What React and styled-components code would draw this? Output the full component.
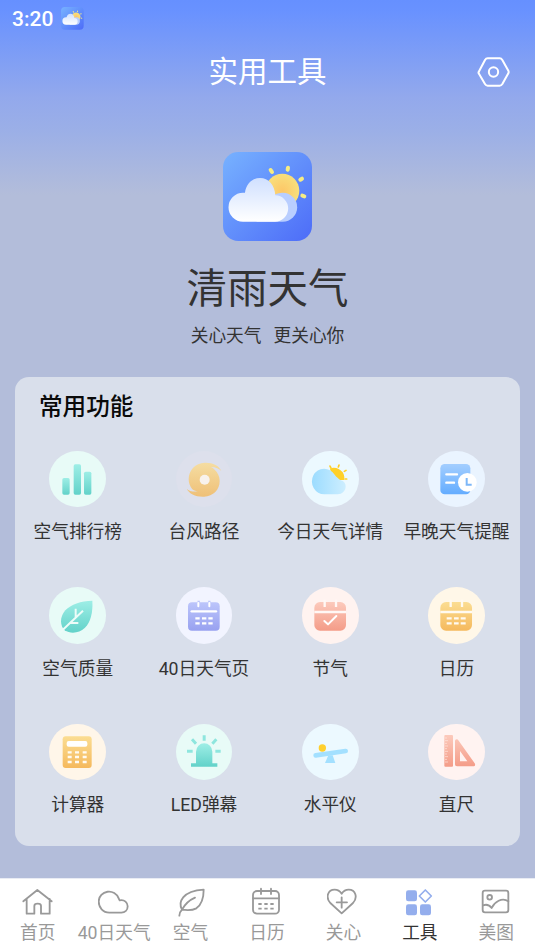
import React, { useState } from "react";
import styled, { createGlobalStyle } from "styled-components";

const GRADIENTS = {
  mint: ["#9eeee6", "#62d2c9"],
  sand: ["#f5dda2", "#efc077"],
  sky: ["#9cdcff", "#cdeeff"],
  blue: ["#a3ceff", "#63acff"],
  violet: ["#bcc5fb", "#98a1f0"],
  coral: ["#fccabc", "#f49c88"],
  amber: ["#fbdd92", "#f5b95d"],
};

const Gradients = () => (
  <HiddenSvg>
    <defs>
      {Object.entries(GRADIENTS).map(([name, [from, to]]) => (
        <linearGradient
          key={name}
          id={name}
          x1="0"
          y1="0"
          x2={name === "sky" ? "1" : "0"}
          y2={name === "sky" ? "0" : "1"}
        >
          <stop offset="0" stopColor={from} />
          <stop offset="1" stopColor={to} />
        </linearGradient>
      ))}
      <linearGradient id="logoBg" x1="0" y1="0" x2="1" y2="1">
        <stop offset="0" stopColor="#77b2ff" />
        <stop offset="1" stopColor="#4d6cf8" />
      </linearGradient>
      <radialGradient id="logoSun">
        <stop offset="0" stopColor="#fdc767" />
        <stop offset="1" stopColor="#f8df7c" />
      </radialGradient>
      <linearGradient id="logoCloud" x1="0" y1="0" x2="0" y2="1">
        <stop offset="0" stopColor="#d0e0ff" />
        <stop offset="1" stopColor="#ffffff" />
      </linearGradient>
      <linearGradient
        id="coralTall"
        gradientUnits="userSpaceOnUse"
        x1="0"
        y1="33"
        x2="0"
        y2="128"
      >
        <stop offset="0" stopColor="#fccabc" />
        <stop offset="1" stopColor="#f49c88" />
      </linearGradient>
    </defs>
  </HiddenSvg>
);

const Logo = () => (
  <svg viewBox="0 0 267 267" width="100%" height="100%">
    <rect width="267" height="267" rx="46" fill="url(#logoBg)" />
    <circle cx="178" cy="116" r="51" fill="url(#logoSun)" />
    <g stroke="#f6ec84" strokeWidth="12" strokeLinecap="round">
      <path d="M143 54l4 6M194 53l1-6M232 83l5-3M238 131l6 2" />
    </g>
    <path
      d="M100 209h79a43 43 0 0 0 0-87c-10 0-20 3-27 8z"
      fill="#b9ceff"
    />
    <path
      d="M60 209a43.500 43.500 0 0 1 0-87h6c3-26 22-44 45-44 26 0 44 21 46 52a39.500 39.500 0 0 1-2 79z"
      fill="url(#logoCloud)"
    />
  </svg>
);

const TOOLS = [
  {
    name: "空气排行榜",
    bg: "#e8fbf7",
    icon: (
      <g fill="url(#mint)">
        <rect x="40" y="81" width="22" height="50" rx="5" />
        <rect x="74" y="40" width="22" height="91" rx="5" />
        <rect x="105" y="62" width="22" height="69" rx="5" />
      </g>
    ),
  },
  {
    name: "台风路径",
    bg: "#dde0ec",
    icon: (
      <>
        <path
          d="M136 60C129 43 109 34 86 35C58 36 38 58 38 84C38 96 42 106 49 115C55 119 61 121 66 121C52 123 39 120 32 113C40 128 58 138 84 137C112 136 131 116 131 90C131 76 125 64 116 56C112 52 108 50 105 48C119 48 130 53 136 60Z"
          fill="url(#sand)"
        />
        <circle cx="86" cy="86" r="15" fill="#f8f2ec" />
      </>
    ),
  },
  {
    name: "今日天气详情",
    bg: "#ecf9ff",
    icon: (
      <>
        <path
          d="M84 53C96 46 113 52 122 64C127 72 128 80 126 87L112 87C97 82 87 68 84 53Z"
          fill="#ffd028"
        />
        <path
          d="M87 51l-3-6M109 48l2-6M127 61l5-3M129 84l5 0"
          stroke="#ffd028"
          strokeWidth="5"
          strokeLinecap="round"
        />
        <path
          d="M67 130A37 38.500 0 1 1 98 71C103 78 110 83 116 88C126 90 131 98 131 106C131 120 120 130 107 130Z"
          fill="url(#sky)"
        />
      </>
    ),
  },
  {
    name: "早晚天气提醒",
    bg: "#eaf4ff",
    icon: (
      <>
        <rect x="37" y="39" width="90" height="91" rx="13" fill="url(#blue)" />
        <path d="M55 70h32M55 95h23" stroke="#fff" strokeWidth="7" strokeLinecap="round" />
        <circle cx="118" cy="94" r="28" fill="#fff" />
        <path d="M116 81v20h15" fill="none" stroke="#7db7f8" strokeWidth="6" />
      </>
    ),
  },
  {
    name: "空气质量",
    bg: "#e8fbf7",
    icon: (
      <>
        <path
          d="M130 41C95 42 66 52 49 70C31 91 33 117 47 130C64 141 91 139 107 123C125 105 132 76 130 41Z"
          fill="url(#mint)"
        />
        <path d="M32 137L102 71M80 65v26M62 108h26" stroke="#ecfcf8" strokeWidth="6" />
      </>
    ),
  },
  {
    name: "40日天气页",
    bg: "#f2f4ff",
    icon: (
      <>
        <rect x="36" y="46" width="95" height="85" rx="12" fill="url(#violet)" />
        <path d="M68 41v6M100 41v6" stroke="#bcc5fb" strokeWidth="7" />
        <path d="M67 48v10M100 48v10" stroke="#fff" strokeWidth="6" strokeLinecap="round" />
        <path d="M47 73h73" stroke="#fff" strokeWidth="7" strokeLinecap="round" />
        <path
          d="M58 94h13M78 94h13M97 94h13M58 109h13M78 109h13M97 109h13"
          stroke="#fff"
          strokeWidth="7"
        />
      </>
    ),
  },
  {
    name: "节气",
    bg: "#fff3f0",
    icon: (
      <>
        <rect x="37" y="45" width="95" height="86" rx="17" fill="url(#coral)" />
        <path d="M68 38v22M102 38v22M37 75h95" stroke="#fff8f5" strokeWidth="7" />
        <path
          d="M67 102l11 10 25-25"
          fill="none"
          stroke="#fff"
          strokeWidth="6"
          strokeLinecap="round"
          strokeLinejoin="round"
        />
      </>
    ),
  },
  {
    name: "日历",
    bg: "#fff7e8",
    icon: (
      <>
        <rect x="37" y="45" width="95" height="86" rx="17" fill="url(#amber)" />
        <path d="M68 38v22M102 38v22M37 75h95" stroke="#fffaf0" strokeWidth="7" />
        <path
          d="M56 94h15M78 94h14M98 94h15M56 109h15M78 109h14M98 109h15"
          stroke="#fffaf0"
          strokeWidth="7"
        />
      </>
    ),
  },
  {
    name: "计算器",
    bg: "#fff6e9",
    icon: (
      <>
        <rect x="41" y="37" width="87" height="95" rx="9" fill="url(#amber)" />
        <rect x="53" y="51" width="62" height="17" rx="6" fill="#fff" />
        <path
          d="M56 85h12M78 85h12M101 85h12M56 99h12M78 99h12M101 99h12M56 114h12M78 114h12M101 114h12"
          stroke="#fffaf0"
          strokeWidth="7"
        />
      </>
    ),
  },
  {
    name: "LED弹幕",
    bg: "#e8fbf7",
    icon: (
      <>
        <path
          d="M60 118V83a24.500 25 0 0 1 49 0v35h15v10H45v-10z"
          fill="url(#mint)"
        />
        <path
          d="M84.500 34v16M48 46l12 13M121 46l-12 13M33 82h17M118 82h16"
          stroke="#8ee6de"
          strokeWidth="9"
        />
      </>
    ),
  },
  {
    name: "水平仪",
    bg: "#ecf9ff",
    icon: (
      <>
        <path d="M41 94L131 81" stroke="#a3e0ff" strokeWidth="14" strokeLinecap="round" />
        <path d="M79 94h13l8 23H69z" fill="#a3e0ff" />
        <circle cx="61" cy="72" r="11" fill="#ffd02e" />
      </>
    ),
  },
  {
    name: "直尺",
    bg: "#fff3f1",
    icon: (
      <>
        <rect x="49" y="33" width="26" height="95" rx="3" fill="url(#coralTall)" />
        <path
          d="M51 42h6M51 50h9M51 58h6M51 66h9M51 74h6M51 82h9M51 90h6M51 98h9M51 106h6M51 114h9"
          stroke="#ffe9e2"
          strokeWidth="2"
        />
        <path
          fillRule="evenodd"
          d="M81 52C81 44 88 44 92 50L140 118C143 123 141 127 135 127H87C83 127 81 125 81 121ZM96 81V112H118Z"
          fill="url(#coralTall)"
        />
      </>
    ),
  },
];

const TABS = [
  {
    name: "首页",
    icon: (
      <path d="M4 43L46 9L89 43M14 36V80H37V57Q37 50 47 50Q57 50 57 57V80H83V36" />
    ),
  },
  {
    name: "40日天气",
    icon: (
      <path d="M34 77C15 77 2 62 2 43A31 31 0 0 1 62 34C63 37 64 39 65 40C80 37 89 47 89 58C89 69 81 77 70 77Z" />
    ),
  },
  {
    name: "空气",
    icon: (
      <path d="M13 86C13 79 16 73 21 68C9 46 21 12 86 8C86 31 79 53 64 64C51 71 34 70 21 68C32 48 44 39 60 32" />
    ),
  },
  {
    name: "日历",
    icon: (
      <>
        <rect x="6" y="12" width="78" height="68" rx="12" />
        <path d="M30 5v16M60 5v16M6 34h78" />
        <path
          d="M22 51h10M40 51h10M58 51h10M22 65h10M40 65h10M58 65h10"
          strokeLinecap="butt"
        />
      </>
    ),
  },
  {
    name: "关心",
    icon: (
      <path d="M44 79L10 48C-5 31 2 8 23 8C33 8 40 14 44 20C48 14 55 8 65 8C86 8 93 31 78 48ZM44 31v31M29 46h31" />
    ),
  },
  {
    name: "工具",
    solid: true,
    icon: (
      <>
        <rect x="6" y="10" width="33" height="33" rx="7" />
        <rect x="6" y="52" width="33" height="33" rx="7" />
        <rect x="48" y="52" width="33" height="33" rx="7" />
        <path
          d="M64 9L82 27L64 45L46 27Z"
          fill="none"
          stroke="#94aeed"
          strokeWidth="5"
          strokeLinejoin="round"
        />
      </>
    ),
  },
  {
    name: "美图",
    icon: (
      <>
        <rect x="8" y="11" width="77" height="65" rx="7" />
        <circle cx="29" cy="31" r="7" />
        <path d="M9 55C20 51 30 56 35 63C43 45 66 30 85 43" />
      </>
    ),
  },
];

const App = () => {
  const [activeTab, setActiveTab] = useState("工具");

  return (
    <>
      <GlobalStyle />
      <Gradients />
      <Page>
        <StatusBar>
          <Clock>3:20</Clock>
          <LogoBox $size={22.7}>
            <Logo />
          </LogoBox>
        </StatusBar>

        <Header>
          <Title>实用工具</Title>
          <SettingButton aria-label="设置">
            <svg viewBox="0 0 99 90" width="33" height="30">
              <g fill="none" stroke="#fff" strokeWidth="6" strokeLinejoin="round">
                <path d="M5 45L24 9Q27 4 32 4H68Q73 4 76 9L94 41Q96 45 94 49L76 81Q73 86 68 86H32Q27 86 24 81L5 49Q4 47 5 45Z" />
                <circle cx="49.500" cy="45" r="14" />
              </g>
            </svg>
          </SettingButton>
        </Header>

        <Brand>
          <LogoBox $size={89}>
            <Logo />
          </LogoBox>
          <BrandName>清雨天气</BrandName>
          <Slogan>
            <span>关心天气</span>
            <span>更关心你</span>
          </Slogan>
        </Brand>

        <Card>
          <CardTitle>常用功能</CardTitle>
          <ToolGrid>
            {TOOLS.map((tool) => (
              <Tool key={tool.name}>
                <ToolIcon $bg={tool.bg} viewBox="0 0 170 170">
                  {tool.icon}
                </ToolIcon>
                <ToolName>{tool.name}</ToolName>
              </Tool>
            ))}
          </ToolGrid>
        </Card>

        <TabBar>
          {TABS.map((tab) => (
            <Tab
              key={tab.name}
              $active={tab.name === activeTab}
              onClick={() => setActiveTab(tab.name)}
            >
              <TabIcon $solid={tab.solid} viewBox="0 0 96 90">
                {tab.icon}
              </TabIcon>
              <span>{tab.name}</span>
            </Tab>
          ))}
        </TabBar>
      </Page>
    </>
  );
};

export default App;

const GlobalStyle = createGlobalStyle`
  * {
    box-sizing: border-box;
  }

  body {
    margin: 0;
    font-family: Roboto, "Noto Sans CJK SC", sans-serif;
  }

  button {
    padding: 0;
    border: none;
    background: none;
    font: inherit;
    cursor: pointer;
  }

  svg {
    display: block;
  }
`;

const HiddenSvg = styled.svg`
  position: absolute;
  width: 0;
  height: 0;
`;

const Page = styled.div`
  display: flex;
  flex-direction: column;
  width: 535px;
  height: 951px;
  overflow: hidden;
  background: linear-gradient(
    #6690ff 0,
    #6992ff 12px,
    #93a9ec 98px,
    #9bafe7 130px,
    #b3bdda 195px,
    #b3bdda 100%
  );
`;

const StatusBar = styled.div`
  display: flex;
  align-items: center;
  gap: 8px;
  height: 37px;
  padding-left: 12px;
`;

const Clock = styled.span`
  font-size: 21px;
  font-weight: 500;
  color: #fff;
`;

const LogoBox = styled.div`
  width: ${({ $size }) => $size}px;
  height: ${({ $size }) => $size}px;
`;

const Header = styled.header`
  display: grid;
  grid-template-columns: 1fr auto 1fr;
  align-items: center;
  height: 68px;
  padding: 1px 25px 0;
`;

const Title = styled.h1`
  grid-column: 2;
  margin: 0;
  padding-top: 1px;
  font-size: 29.5px;
  font-weight: 400;
  line-height: 40px;
  color: #fff;
`;

const SettingButton = styled.button`
  justify-self: end;
`;

const Brand = styled.section`
  display: flex;
  flex-direction: column;
  align-items: center;
  height: 271.5px;
  padding-top: 46.6px;
`;

const BrandName = styled.h2`
  margin: 18.4px 0 0;
  font-size: 40.5px;
  font-weight: 400;
  line-height: 60px;
  color: #333;
`;

const Slogan = styled.p`
  display: flex;
  gap: 12px;
  margin: 4px 0 0;
  font-size: 17.7px;
  line-height: 26px;
  color: #333;
`;

const Card = styled.section`
  height: 469.5px;
  margin: 0 15px;
  border-radius: 14px;
  background: #d9dfeb;
`;

const CardTitle = styled.h3`
  margin: 0;
  padding: 13px 24px 0;
  font-size: 23.6px;
  font-weight: 500;
  line-height: 34px;
  color: #0a0a0a;
`;

const ToolGrid = styled.div`
  display: grid;
  grid-template-columns: repeat(4, 1fr);
  grid-auto-rows: 136.5px;
  margin: 0 0.4px 0 -0.4px;
  padding-top: 27px;
`;

const Tool = styled.button`
  display: flex;
  flex-direction: column;
  align-items: center;
  gap: 12px;
`;

const ToolIcon = styled.svg`
  width: 56.7px;
  height: 56.7px;
  border-radius: 50%;
  background: ${({ $bg }) => $bg};
`;

const ToolName = styled.span`
  font-size: 17.7px;
  line-height: 26px;
  white-space: nowrap;
  color: #333;
`;

const TabBar = styled.nav`
  display: grid;
  grid-template-columns: repeat(7, 1fr);
  height: 73px;
  margin: auto 0 0;
  border-top: 1px solid #e9ecf4;
  background: #fff;
`;

const Tab = styled.button`
  display: flex;
  flex-direction: column;
  align-items: center;
  gap: 1px;
  padding: 7.7px 1px 0 0;
  font-size: 17.7px;
  line-height: 30px;
  white-space: nowrap;
  color: ${({ $active }) => ($active ? "#333" : "#999")};
`;

const TabIcon = styled.svg`
  width: 32px;
  height: 30px;
  fill: ${({ $solid }) => ($solid ? "#94aeed" : "none")};
  stroke: ${({ $solid }) => ($solid ? "none" : "#999")};
  stroke-width: 5.5;
  stroke-linecap: round;
  stroke-linejoin: round;
`;
